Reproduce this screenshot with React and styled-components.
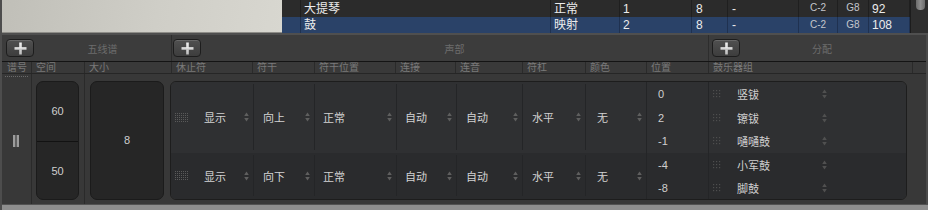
import React from "react";
import styled, { createGlobalStyle } from "styled-components";

const Global = createGlobalStyle`
  html, body { margin: 0; padding: 0; background: #393939; overflow: hidden; }
  * { box-sizing: border-box; }
`;

const FONT = `"Liberation Sans", "Noto Sans CJK SC", sans-serif`;

const Frame = styled.div`
  width: 928px;
  height: 210px;
  display: flex;
  flex-direction: column;
  font-family: ${FONT};
  border-left: 2px solid #4d4d4d;
  background: #393939;
`;

/* ---------- top list ---------- */
const TopArea = styled.div`
  height: 35px;
  display: flex;
  border-bottom: 2px solid #4f4f4f;
  flex-shrink: 0;
`;
const SidePanel = styled.div`
  width: 280px;
  background: linear-gradient(100deg, #c0bfb8 0%, #cfcec7 55%, #d8d7d0 100%);
  border-bottom: 1px solid #8e8d88;
`;
const List = styled.div`
  flex: 1;
  display: flex;
  flex-direction: column;
  background: #2b2b2b;
`;
const ListRow = styled.div`
  height: ${(p) => p.$h}px;
  display: grid;
  grid-template-columns: 19px 250px 69px 72px 36px 71px 39px 31px 41px;
  background: ${(p) => (p.$selected ? "#2a4268" : "#2b2b2b")};
  color: #ececec;
  font-size: 12px;
`;
const ListCell = styled.div`
  border-right: 1px solid ${(p) => (p.$selected ? "#1f3150" : "#1f1f1f")};
  display: flex;
  align-items: flex-end;
  padding: 0 0 1px ${(p) => p.$pl ?? 3}px;
  line-height: 14px;
  white-space: nowrap;
  overflow: hidden;
`;
const SmallCell = styled(ListCell)`
  align-items: flex-start;
  justify-content: center;
  padding: 1px 0 0;
  font-size: 10px;
  color: #c4c6cc;
`;
const ScrollTrack = styled.div`
  width: 18px;
  background: #2e2e2e;
  border-left: 1px solid #1c1c1c;
  display: flex;
  justify-content: center;
  padding-left: 1px;
`;
const Thumb = styled.div`
  width: 9px;
  height: 13px;
  margin-top: -3px;
  border-radius: 4px;
  background: linear-gradient(90deg, #6c6c6c, #8e8e8e 50%, #6c6c6c);
`;

/* ---------- lower panel ---------- */
const Lower = styled.div`
  flex: 1;
  display: flex;
  flex-direction: column;
  border-right: 2px solid #4a4a4a;
`;

const Toolbar = styled.div`
  height: 26px;
  display: flex;
  background: #3c3c3c;
  flex-shrink: 0;
`;
const ToolSection = styled.div`
  width: ${(p) => (p.$w ? `${p.$w}px` : "auto")};
  flex: ${(p) => (p.$w ? "none" : 1)};
  display: flex;
  align-items: center;
  padding: 0 ${(p) => p.$pr ?? 0}px 0 ${(p) => p.$pl}px;
  border-left: ${(p) => (p.$divider ? "1px solid #2d2d2d" : "none")};
`;
const PlusButton = styled.button`
  width: 28px;
  height: 18px;
  padding: 0;
  border: 1px solid #1d1d1d;
  border-radius: 4px;
  background: linear-gradient(#505050, #3d3d3d);
  box-shadow: inset 0 1px 0 rgba(255, 255, 255, 0.14);
  display: flex;
  align-items: center;
  justify-content: center;
  flex-shrink: 0;
`;
const ToolLabel = styled.div`
  flex: 1;
  text-align: center;
  font-size: 10px;
  color: #6c6c6c;
`;

const HeaderRow = styled.div`
  height: 13px;
  display: flex;
  background: #393939;
  border-top: 1px solid #141414;
  border-bottom: 1px solid #262626;
  flex-shrink: 0;
`;
const HeaderCell = styled.div`
  width: ${(p) => (p.$w ? `${p.$w}px` : "auto")};
  flex: ${(p) => (p.$w ? "none" : 1)};
  border-right: ${(p) => (p.$last ? "none" : "1px solid #2a2a2a")};
  font-size: 10px;
  line-height: 11px;
  color: #7a7a7a;
  padding-left: ${(p) => p.$pl ?? 4}px;
  white-space: nowrap;
  overflow: hidden;
`;

const Body = styled.div`
  flex: 1;
  display: flex;
  background: #383838;
`;
const StaffCol = styled.div`
  width: 30px;
  border-right: 1px solid #2a2a2a;
  display: flex;
  flex-direction: column;
  align-items: center;
  padding-top: 2px;
`;
const DottedLine = styled.div`
  width: 23px;
  border-top: 1px dotted #6a6a6a;
`;
const PauseIcon = styled.div`
  flex: 1;
  display: flex;
  align-items: center;
  padding-right: 2px;
`;
const BoxCol = styled.div`
  width: ${(p) => p.$w}px;
  border-right: ${(p) => (p.$divider ? "1px solid #2a2a2a" : "none")};
  padding: 7px 0 4px ${(p) => p.$pl}px;
  display: flex;
`;
const ValueBox = styled.div`
  width: ${(p) => p.$w}px;
  border: 1px solid #1b1b1b;
  border-radius: 7px;
  background: #262626;
  display: flex;
  flex-direction: column;
  overflow: hidden;
`;
const ValueHalf = styled.div`
  flex: 1;
  display: flex;
  align-items: center;
  justify-content: center;
  font-size: 11px;
  color: #cfcfcf;
  padding-bottom: ${(p) => p.$pb ?? 0}px;
  & + & {
    border-top: 1px solid #121212;
  }
`;

const MainWrap = styled.div`
  padding: 7px 0 4px 0;
  display: flex;
`;
const MainBox = styled.div`
  width: 737px;
  border: 1px solid #1d1d1d;
  border-radius: 6px;
  overflow: hidden;
  display: flex;
  flex-direction: column;
`;
const VoiceRow = styled.div`
  height: ${(p) => p.$h}px;
  display: grid;
  grid-template-columns: 82px 61px 82px 60px 66px 63px 61px 62px 1fr;
  background: ${(p) => p.$bg};
`;
const Cell = styled.div`
  display: flex;
  align-items: center;
  margin: 2px 0 3px;
  border-left: ${(p) => (p.$first ? "none" : "1px solid #242527")};
  padding: 0 4px 0 ${(p) => p.$pl ?? 9}px;
  font-size: 11px;
  color: #d3d3d3;
`;
const StackCell = styled.div`
  display: flex;
  flex-direction: column;
  margin: 0;
  border-left: 1px solid #242527;
  padding-left: ${(p) => p.$pl}px;
  font-size: 11px;
  color: #cfcfcf;
`;
const CellText = styled.span`
  flex: 1;
  white-space: nowrap;
`;
const Grip = styled.span`
  display: flex;
  margin-right: 16px;
`;
const StackItem = styled.div`
  flex: 1;
  display: flex;
  align-items: center;
`;
const DrumName = styled.span`
  width: 85px;
  white-space: nowrap;
`;

const Footer = styled.div`
  height: 6px;
  background: #8e8e8e;
  border-top: 1px solid #525252;
  flex-shrink: 0;
`;

/* ---------- drawings ---------- */
const Plus = () => (
  <svg width="13" height="13" viewBox="0 0 13 13">
    <defs>
      <linearGradient id="pg" x1="0" y1="0" x2="0" y2="1">
        <stop offset="0" stopColor="#f2f2f2" />
        <stop offset="1" stopColor="#bdbdbd" />
      </linearGradient>
    </defs>
    <rect x="5.2" y="0.5" width="2.6" height="12" fill="url(#pg)" />
    <rect x="0.5" y="5.2" width="12" height="2.6" fill="url(#pg)" />
  </svg>
);

const Arrows = ({ color = "#5f5f5f" }) => (
  <svg width="5" height="10" viewBox="0 0 5 10">
    <path d="M2.5 0.5 L4.8 4 L0.2 4 Z" fill={color} />
    <path d="M0.2 6 L4.8 6 L2.5 9.5 Z" fill={color} />
  </svg>
);

const GripBig = () => {
  const dots = [];
  for (let r = 0; r < 5; r++)
    for (let c = 0; c < 7; c++)
      dots.push(<rect key={`${r}-${c}`} x={c * 2} y={r * 2} width="1" height="1" fill="#5a5a5a" />);
  return (
    <svg width="13" height="9" viewBox="0 0 13 9">
      {dots}
    </svg>
  );
};

const GripSmall = () => {
  const dots = [];
  for (let r = 0; r < 3; r++)
    for (let c = 0; c < 3; c++)
      dots.push(<rect key={`${r}-${c}`} x={c * 3} y={r * 3} width="1.2" height="1.2" fill="#4e4e4e" />);
  return (
    <svg width="8" height="8" viewBox="0 0 8 8">
      {dots}
    </svg>
  );
};

const Pause = () => (
  <svg width="6" height="12" viewBox="0 0 6 12">
    <rect x="0" y="0" width="2.4" height="12" fill="#9c9c9c" />
    <rect x="3.6" y="0" width="2.4" height="12" fill="#9c9c9c" />
  </svg>
);

/* ---------- data ---------- */
const listRows = [
  { h: 17, cells: ["大提琴", "正常", "1", "8", "-", "C-2", "G8", "92"] },
  { h: 16, selected: true, cells: ["鼓", "映射", "2", "8", "-", "C-2", "G8", "108"] },
];

const headers = [
  { t: "谱号", w: 30 },
  { t: "空间", w: 53 },
  { t: "大小", w: 87 },
  { t: "休止符", w: 81 },
  { t: "符干", w: 62 },
  { t: "符干位置", w: 81 },
  { t: "连接", w: 60 },
  { t: "连音", w: 67 },
  { t: "符杠", w: 63 },
  { t: "颜色", w: 61 },
  { t: "位置", w: 62 },
  { t: "鼓乐器组", w: 204 },
  { t: "", last: true },
];

const voices = [
  {
    h: 71,
    bg: "#2f3032",
    values: ["显示", "向上", "正常", "自动", "自动", "水平", "无"],
    positions: ["0", "2", "-1"],
    drums: ["竖钹", "镲钹", "嗵嗵鼓"],
  },
  {
    h: 46,
    bg: "#2a2b2d",
    values: ["显示", "向下", "正常", "自动", "自动", "水平", "无"],
    positions: ["-4", "-8"],
    drums: ["小军鼓", "脚鼓"],
  },
];

const padLefts = [4, 9, 8, 8, 9, 9, 11];

export default function App() {
  return (
    <>
      <Global />
      <Frame>
        <TopArea>
          <SidePanel />
          <List>
            {listRows.map((row, i) => (
              <ListRow key={i} $h={row.h} $selected={row.selected}>
                <ListCell $selected={row.selected} />
                {row.cells.map((c, j) =>
                  j === 5 || j === 6 ? (
                    <SmallCell key={j} $selected={row.selected}>
                      {c}
                    </SmallCell>
                  ) : (
                    <ListCell key={j} $selected={row.selected} $pl={j === 3 || j === 4 ? 4 : 3}>
                      {c}
                    </ListCell>
                  )
                )}
              </ListRow>
            ))}
          </List>
          <ScrollTrack>
            <Thumb />
          </ScrollTrack>
        </TopArea>

        <Lower>
          <Toolbar>
            <ToolSection $w={169} $pl={4}>
              <PlusButton>
                <Plus />
              </PlusButton>
              <ToolLabel>五线谱</ToolLabel>
            </ToolSection>
            <ToolSection $w={537} $pl={1} $divider>
              <PlusButton>
                <Plus />
              </PlusButton>
              <ToolLabel>声部</ToolLabel>
            </ToolSection>
            <ToolSection $pl={3} $pr={22} $divider>
              <PlusButton>
                <Plus />
              </PlusButton>
              <ToolLabel>分配</ToolLabel>
            </ToolSection>
          </Toolbar>

          <HeaderRow>
            {headers.map((h, i) => (
              <HeaderCell key={i} $w={h.w} $last={h.last} $pl={i === 0 ? 5 : 4}>
                {h.t}
              </HeaderCell>
            ))}
          </HeaderRow>

          <Body>
            <StaffCol>
              <DottedLine />
              <PauseIcon>
                <Pause />
              </PauseIcon>
            </StaffCol>
            <BoxCol $w={53} $pl={4} $divider>
              <ValueBox $w={43}>
                <ValueHalf $pb={2}>60</ValueHalf>
                <ValueHalf>50</ValueHalf>
              </ValueBox>
            </BoxCol>
            <BoxCol $w={85} $pl={5}>
              <ValueBox $w={74}>
                <ValueHalf $pb={2}>8</ValueHalf>
              </ValueBox>
            </BoxCol>
            <MainWrap>
              <MainBox>
                {voices.map((v, i) => (
                  <VoiceRow key={i} $h={v.h} $bg={v.bg}>
                    {v.values.map((val, j) => (
                      <Cell key={j} $first={j === 0} $pl={padLefts[j]}>
                        {j === 0 && (
                          <Grip>
                            <GripBig />
                          </Grip>
                        )}
                        <CellText>{val}</CellText>
                        <Arrows />
                      </Cell>
                    ))}
                    <StackCell $pl={11}>
                      {v.positions.map((p, k) => (
                        <StackItem key={k}>{p}</StackItem>
                      ))}
                    </StackCell>
                    <StackCell $pl={4}>
                      {v.drums.map((d, k) => (
                        <StackItem key={k}>
                          <Grip>
                            <GripSmall />
                          </Grip>
                          <DrumName>{d}</DrumName>
                          <Arrows color="#505050" />
                        </StackItem>
                      ))}
                    </StackCell>
                  </VoiceRow>
                ))}
              </MainBox>
            </MainWrap>
          </Body>
        </Lower>
        <Footer />
      </Frame>
    </>
  );
}
